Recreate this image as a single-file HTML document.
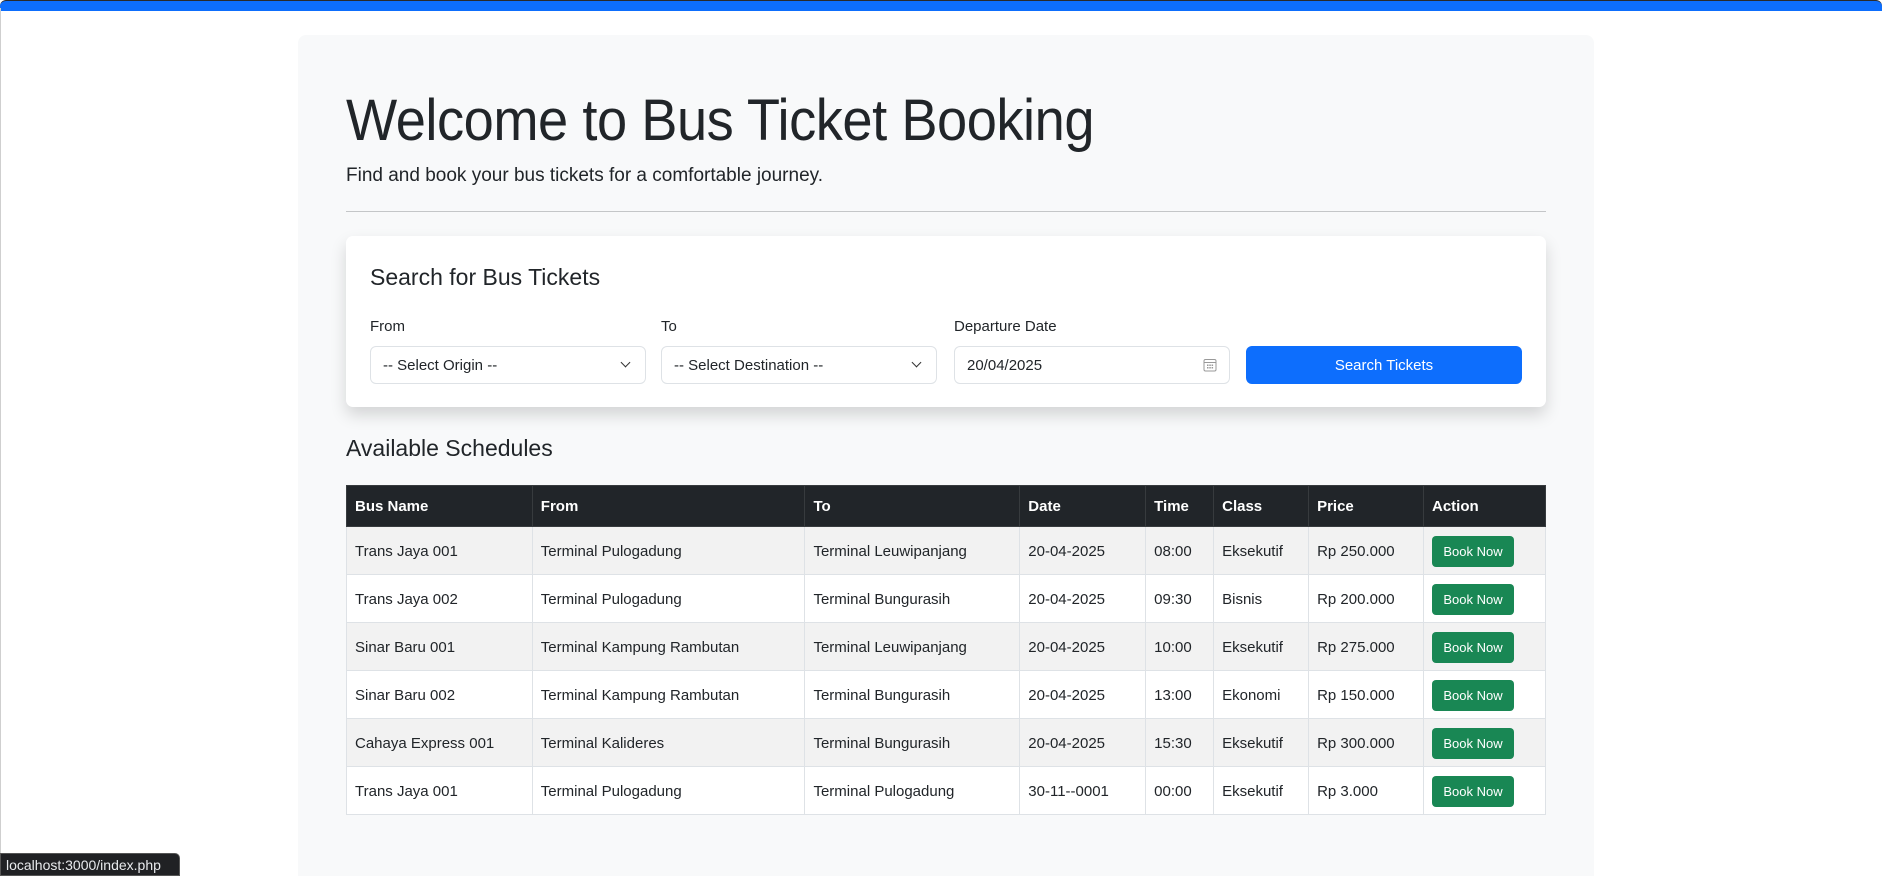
<!DOCTYPE html>
<html><head><meta charset="utf-8">
<style>
*{box-sizing:border-box;margin:0;padding:0}
html,body{width:1882px;height:876px;overflow:hidden;background:#fff;font-family:"Liberation Sans",sans-serif;color:#212529;position:relative}
.topbar{position:absolute;left:0;top:0;width:1882px;height:11px;background:#0d6efd;border-top:1px solid #2a2a2a;border-radius:6px 6px 0 0}
.leftline{position:absolute;left:0;top:8px;width:1px;height:868px;background:#cfcfcf}
.cont{position:absolute;left:298px;top:35px;width:1296px;height:841px;background:#f8f9fa;border-radius:8px 8px 0 0}
h1{position:absolute;left:346px;top:87px;font-size:58px;font-weight:300;white-space:nowrap;transform-origin:left top;transform:scaleX(0.935);letter-spacing:-0.5px;color:#212529}
.lead{position:absolute;left:346px;top:165px;font-size:19px;white-space:nowrap}
.hr{position:absolute;left:346px;top:211px;width:1200px;height:1px;background:#c4c6c8}
.card{position:absolute;left:346px;top:236px;width:1200px;height:171px;background:#fff;border-radius:7px;box-shadow:0 .5rem 1rem rgba(0,0,0,.15)}
.card h4{position:absolute;left:24px;top:28px;font-size:23px;font-weight:400}
.lbl{position:absolute;top:82px;font-size:15px}
.inp{position:absolute;top:110px;height:38px;width:276px;border:1px solid #dee2e6;border-radius:6px;font-size:15px;padding:10px 12px;background:#fff}
.chev{position:absolute;right:16px;top:12px;width:7px;height:7px;border-right:1.6px solid #333;border-bottom:1.6px solid #333;transform:rotate(45deg)}
.btn{position:absolute;top:110px;left:900px;width:276px;height:38px;background:#0d6efd;color:#fff;border-radius:6px;font-size:15px;text-align:center;line-height:40px}
h3{position:absolute;left:346px;top:435px;font-size:23px;font-weight:400}
table{position:absolute;left:346px;top:485px;width:1200px;border-collapse:collapse;font-size:15px}
th{background:#212529;color:#fff;text-align:left;height:41px;padding:0 8px;font-weight:bold;border:1px solid #373b3e}
td{height:48px;padding:1px 8px 0;border:1px solid #dee2e6;background:#fff}
tr:nth-child(even) td{background:#f2f2f2}
.bk{display:inline-block;background:#198754;color:#fff;font-size:13px;padding:0 8px;height:31px;line-height:31px;border-radius:4px;width:82px;text-align:center}
.status{position:absolute;left:0;top:853px;width:180px;height:23px;background:#202124;color:#e8eaed;font-size:14px;line-height:23px;padding-left:5px;border-radius:0 5px 0 0;border:1px solid #555}
</style></head><body>
<div class="topbar"></div><div class="leftline"></div>
<div class="cont"></div>
<h1>Welcome to Bus Ticket Booking</h1>
<div class="lead">Find and book your bus tickets for a comfortable journey.</div>
<div class="hr"></div>
<div class="card">
<h4>Search for Bus Tickets</h4>
<div class="lbl" style="left:24px">From</div>
<div class="lbl" style="left:315px">To</div>
<div class="lbl" style="left:608px">Departure Date</div>
<div class="inp" style="left:24px">-- Select Origin --<span class="chev"></span></div>
<div class="inp" style="left:315px">-- Select Destination --<span class="chev"></span></div>
<div class="inp" style="left:608px">20/04/2025
<svg style="position:absolute;right:12px;top:11px" width="14" height="14" viewBox="0 0 14 14"><rect x="1" y="1.5" width="12" height="11.5" rx="1.5" fill="none" stroke="#999" stroke-width="1"/><line x1="1" y1="4.5" x2="13" y2="4.5" stroke="#999"/><g fill="#999"><rect x="4" y="6.5" width="1.5" height="1.5"/><rect x="6.3" y="6.5" width="1.5" height="1.5"/><rect x="8.6" y="6.5" width="1.5" height="1.5"/><rect x="4" y="9" width="1.5" height="1.5"/><rect x="6.3" y="9" width="1.5" height="1.5"/><rect x="8.6" y="9" width="1.5" height="1.5"/></g></svg></div>
<div class="btn">Search Tickets</div>
</div>
<h3>Available Schedules</h3>
<table>
<colgroup><col style="width:186px"><col style="width:273px"><col style="width:215px"><col style="width:126px"><col style="width:68px"><col style="width:95px"><col style="width:115px"><col style="width:122px"></colgroup>
<tr><th>Bus Name</th><th>From</th><th>To</th><th>Date</th><th>Time</th><th>Class</th><th>Price</th><th>Action</th></tr>
<tr><td>Trans Jaya 001</td><td>Terminal Pulogadung</td><td>Terminal Leuwipanjang</td><td>20-04-2025</td><td>08:00</td><td>Eksekutif</td><td>Rp 250.000</td><td><span class="bk">Book Now</span></td></tr>
<tr><td>Trans Jaya 002</td><td>Terminal Pulogadung</td><td>Terminal Bungurasih</td><td>20-04-2025</td><td>09:30</td><td>Bisnis</td><td>Rp 200.000</td><td><span class="bk">Book Now</span></td></tr>
<tr><td>Sinar Baru 001</td><td>Terminal Kampung Rambutan</td><td>Terminal Leuwipanjang</td><td>20-04-2025</td><td>10:00</td><td>Eksekutif</td><td>Rp 275.000</td><td><span class="bk">Book Now</span></td></tr>
<tr><td>Sinar Baru 002</td><td>Terminal Kampung Rambutan</td><td>Terminal Bungurasih</td><td>20-04-2025</td><td>13:00</td><td>Ekonomi</td><td>Rp 150.000</td><td><span class="bk">Book Now</span></td></tr>
<tr><td>Cahaya Express 001</td><td>Terminal Kalideres</td><td>Terminal Bungurasih</td><td>20-04-2025</td><td>15:30</td><td>Eksekutif</td><td>Rp 300.000</td><td><span class="bk">Book Now</span></td></tr>
<tr><td>Trans Jaya 001</td><td>Terminal Pulogadung</td><td>Terminal Pulogadung</td><td>30-11--0001</td><td>00:00</td><td>Eksekutif</td><td>Rp 3.000</td><td><span class="bk">Book Now</span></td></tr>
</table>
<div class="status">localhost:3000/index.php</div>
</body></html>
